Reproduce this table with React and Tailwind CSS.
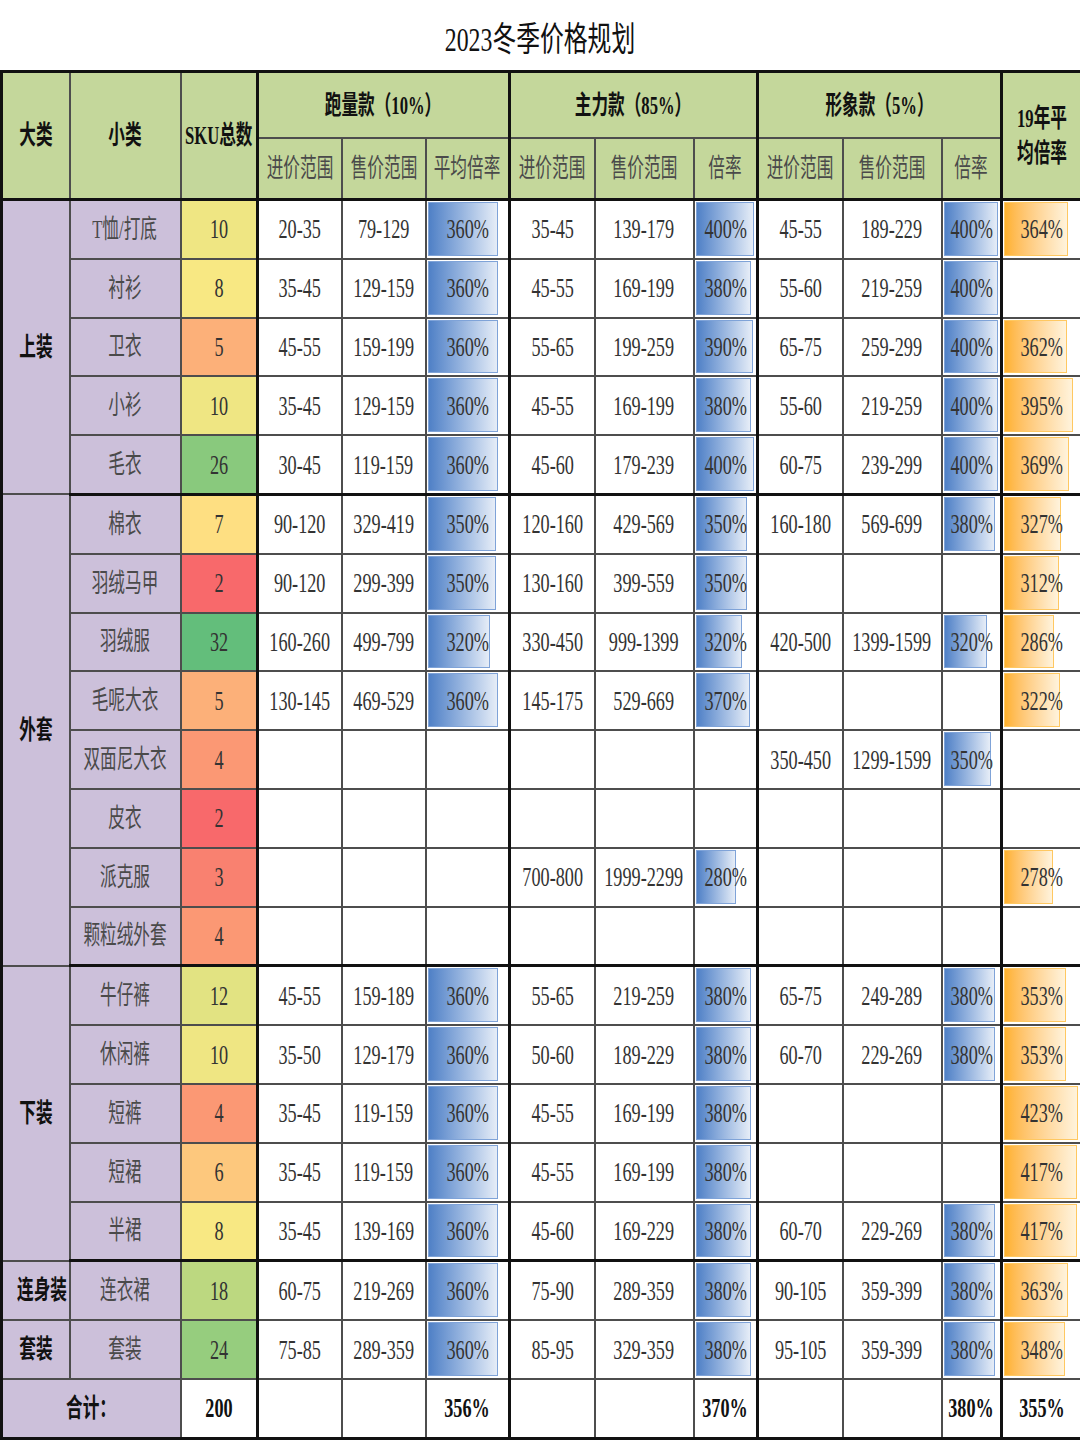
import React from "react";

const groups = [
  {
    name: "上装",
    rows: [
      ["T恤/打底", 10, "20-35", "79-129", 360, "35-45", "139-179", 400, "45-55", "189-229", 400, 364],
      ["衬衫", 8, "35-45", "129-159", 360, "45-55", "169-199", 380, "55-60", "219-259", 400, null],
      ["卫衣", 5, "45-55", "159-199", 360, "55-65", "199-259", 390, "65-75", "259-299", 400, 362],
      ["小衫", 10, "35-45", "129-159", 360, "45-55", "169-199", 380, "55-60", "219-259", 400, 395],
      ["毛衣", 26, "30-45", "119-159", 360, "45-60", "179-239", 400, "60-75", "239-299", 400, 369],
    ],
  },
  {
    name: "外套",
    rows: [
      ["棉衣", 7, "90-120", "329-419", 350, "120-160", "429-569", 350, "160-180", "569-699", 380, 327],
      ["羽绒马甲", 2, "90-120", "299-399", 350, "130-160", "399-559", 350, "", "", null, 312],
      ["羽绒服", 32, "160-260", "499-799", 320, "330-450", "999-1399", 320, "420-500", "1399-1599", 320, 286],
      ["毛呢大衣", 5, "130-145", "469-529", 360, "145-175", "529-669", 370, "", "", null, 322],
      ["双面尼大衣", 4, "", "", null, "", "", null, "350-450", "1299-1599", 350, null],
      ["皮衣", 2, "", "", null, "", "", null, "", "", null, null],
      ["派克服", 3, "", "", null, "700-800", "1999-2299", 280, "", "", null, 278],
      ["颗粒绒外套", 4, "", "", null, "", "", null, "", "", null, null],
    ],
  },
  {
    name: "下装",
    rows: [
      ["牛仔裤", 12, "45-55", "159-189", 360, "55-65", "219-259", 380, "65-75", "249-289", 380, 353],
      ["休闲裤", 10, "35-50", "129-179", 360, "50-60", "189-229", 380, "60-70", "229-269", 380, 353],
      ["短裤", 4, "35-45", "119-159", 360, "45-55", "169-199", 380, "", "", null, 423],
      ["短裙", 6, "35-45", "119-159", 360, "45-55", "169-199", 380, "", "", null, 417],
      ["半裙", 8, "35-45", "139-169", 360, "45-60", "169-229", 380, "60-70", "229-269", 380, 417],
    ],
  },
  {
    name: "连身装",
    rows: [["连衣裙", 18, "60-75", "219-269", 360, "75-90", "289-359", 380, "90-105", "359-399", 380, 363]],
  },
  {
    name: "套装",
    rows: [["套装", 24, "75-85", "289-359", 360, "85-95", "329-359", 380, "95-105", "359-399", 380, 348]],
  },
];

// colour scale of the SKU column (red - yellow - green)
const skuBg = {
  2: "bg-[#f8696b]",
  3: "bg-[#f98170]",
  4: "bg-[#fb9874]",
  5: "bg-[#fcb079]",
  6: "bg-[#fdc87d]",
  7: "bg-[#fedf82]",
  8: "bg-[#f8e883]",
  10: "bg-[#efe683]",
  12: "bg-[#e2e382]",
  18: "bg-[#bcd880]",
  24: "bg-[#96cd7e]",
  26: "bg-[#89c97d]",
  32: "bg-[#63be7b]",
};

const cols = [68, 111, 77, 84, 84, 84, 85, 99, 64, 85, 99, 60, 80];

const thin = "border-2 border-[#4d4d4d] p-0 text-center align-middle";
const thickL = "border-l-[3px] border-l-[#111]";
const thickB = "border-b-[3px] border-b-[#111]";

function T({ children, bold, num }) {
  return (
    <span
      className={`inline-block whitespace-nowrap ${num ? "text-[28px] scale-x-[0.65]" : "text-[26px] scale-x-[0.64]"} ${
        bold ? "font-bold text-[#111]" : num ? "text-[#333]" : "text-[#4a4a4a]"
      }`}
    >
      {children}
    </span>
  );
}

function Cell({ children, h = "h-[56.8px]" }) {
  return <div className={`relative flex items-center justify-center ${h}`}>{children}</div>;
}

function Bar({ v, max, orange }) {
  if (v == null) return <Cell />;
  return (
    <Cell>
      <div
        className={`absolute top-[1px] bottom-[2px] left-[1px] border ${
          orange
            ? "border-[#ffc861] bg-linear-to-r from-[#ffb12a] to-[#fff3dc]"
            : "border-[#7fa3d8] bg-linear-to-r from-[#4f80c6] to-[#e6edf7]"
        }`}
        style={{ width: `calc((100% - 3px) * ${v / max})` }}
      />
      <span className="relative">
        <T num>{v}%</T>
      </span>
    </Cell>
  );
}

function Txt({ v, bold }) {
  return (
    <Cell>
      <T num bold={bold}>
        {v}
      </T>
    </Cell>
  );
}

export default function App() {
  return (
    <div className="w-[1080px] bg-white font-['Liberation_Serif','Noto_Sans_CJK_SC',serif]">
      <div className="flex h-[70px] items-center justify-center pt-[8px]">
        <span className="inline-block scale-x-[0.7] text-[34px] text-[#111]">2023冬季价格规划</span>
      </div>
      <table className="w-[1080px] table-fixed border-collapse border-[3px] border-[#111]">
        <colgroup>
          {cols.map((w, i) => (
            <col key={i} style={{ width: w }} />
          ))}
        </colgroup>
        <thead className="bg-[#c4d79b]">
          <tr>
            <th rowSpan={2} className={`${thin} ${thickB}`}>
              <Cell h="h-auto">
                <T bold>大类</T>
              </Cell>
            </th>
            <th rowSpan={2} className={`${thin} ${thickB}`}>
              <Cell h="h-auto">
                <T bold>小类</T>
              </Cell>
            </th>
            <th rowSpan={2} className={`${thin} ${thickB}`}>
              <Cell h="h-auto">
                <T bold>SKU总数</T>
              </Cell>
            </th>
            <th colSpan={3} className={`${thin} ${thickL}`}>
              <Cell h="h-[64px]">
                <T bold>跑量款（10%）</T>
              </Cell>
            </th>
            <th colSpan={3} className={`${thin} ${thickL}`}>
              <Cell h="h-[64px]">
                <T bold>主力款（85%）</T>
              </Cell>
            </th>
            <th colSpan={3} className={`${thin} ${thickL}`}>
              <Cell h="h-[64px]">
                <T bold>形象款（5%）</T>
              </Cell>
            </th>
            <th rowSpan={2} className={`${thin} ${thickL} ${thickB}`}>
              <div className="flex flex-col items-center leading-[35px]">
                <T bold>19年平</T>
                <T bold>均倍率</T>
              </div>
            </th>
          </tr>
          <tr>
            {["进价范围", "售价范围", "平均倍率", "进价范围", "售价范围", "倍率", "进价范围", "售价范围", "倍率"].map(
              (t, i) => (
                <th key={i} className={`${thin} ${thickB} font-normal ${i % 3 === 0 ? thickL : ""}`}>
                  <Cell h="h-[59px]">
                    <T>{t}</T>
                  </Cell>
                </th>
              )
            )}
          </tr>
        </thead>
        <tbody>
          {groups.map((g) =>
            g.rows.map((r, ri) => {
              const last = ri === g.rows.length - 1 && g.name !== "连身装" && g.name !== "套装";
              const b = last ? thickB : "";
              return (
                <tr key={g.name + ri}>
                  {ri === 0 && (
                    <td rowSpan={g.rows.length} className={`${thin} ${b} bg-[#ccc0da]`}>
                      <T bold>{g.name}</T>
                    </td>
                  )}
                  <td className={`${thin} ${b} bg-[#ccc0da]`}>
                    <Cell>
                      <T>{r[0]}</T>
                    </Cell>
                  </td>
                  <td className={`${thin} ${b} ${skuBg[r[1]]}`}>
                    <Txt v={r[1]} />
                  </td>
                  <td className={`${thin} ${b} ${thickL}`}>
                    <Txt v={r[2]} />
                  </td>
                  <td className={`${thin} ${b}`}>
                    <Txt v={r[3]} />
                  </td>
                  <td className={`${thin} ${b}`}>
                    <Bar v={r[4]} max={400} />
                  </td>
                  <td className={`${thin} ${b} ${thickL}`}>
                    <Txt v={r[5]} />
                  </td>
                  <td className={`${thin} ${b}`}>
                    <Txt v={r[6]} />
                  </td>
                  <td className={`${thin} ${b}`}>
                    <Bar v={r[7]} max={400} />
                  </td>
                  <td className={`${thin} ${b} ${thickL}`}>
                    <Txt v={r[8]} />
                  </td>
                  <td className={`${thin} ${b}`}>
                    <Txt v={r[9]} />
                  </td>
                  <td className={`${thin} ${b}`}>
                    <Bar v={r[10]} max={400} />
                  </td>
                  <td className={`${thin} ${b} ${thickL}`}>
                    <Bar v={r[11]} max={423} orange />
                  </td>
                </tr>
              );
            })
          )}
          <tr>
            <td colSpan={2} className={`${thin} bg-[#ccc0da]`}>
              <Cell>
                <T bold>合计：</T>
              </Cell>
            </td>
            <td className={thin}>
              <Txt v="200" bold />
            </td>
            <td className={`${thin} ${thickL}`} />
            <td className={thin} />
            <td className={thin}>
              <Txt v="356%" bold />
            </td>
            <td className={`${thin} ${thickL}`} />
            <td className={thin} />
            <td className={thin}>
              <Txt v="370%" bold />
            </td>
            <td className={`${thin} ${thickL}`} />
            <td className={thin} />
            <td className={thin}>
              <Txt v="380%" bold />
            </td>
            <td className={`${thin} ${thickL}`}>
              <Txt v="355%" bold />
            </td>
          </tr>
        </tbody>
      </table>
    </div>
  );
}
